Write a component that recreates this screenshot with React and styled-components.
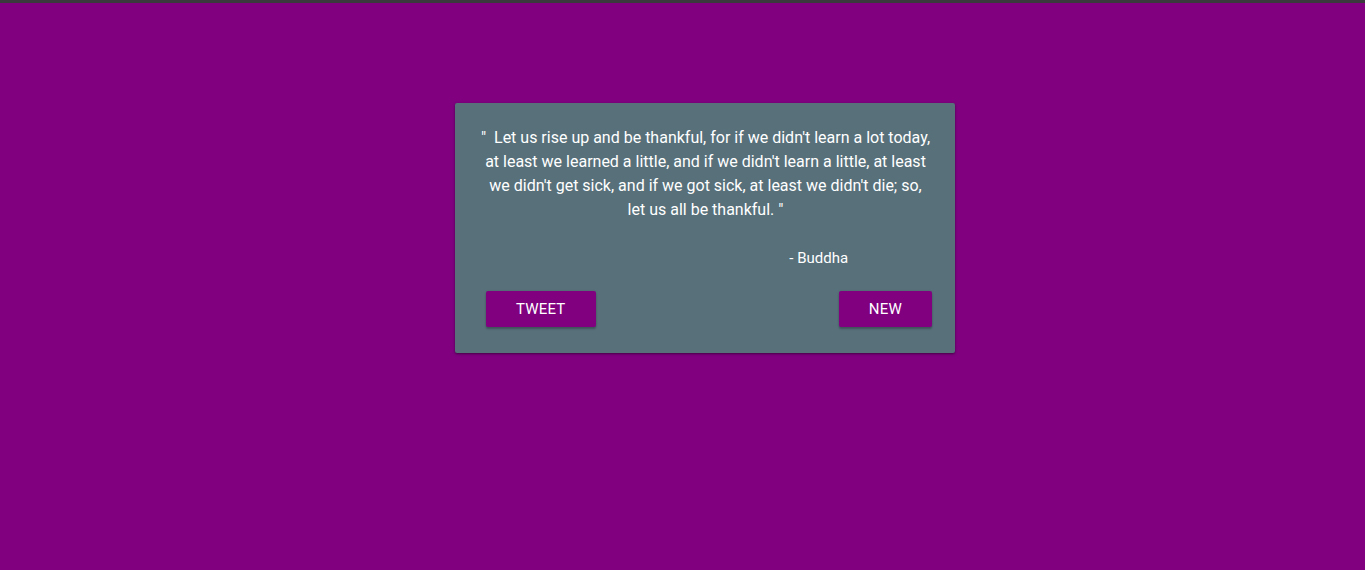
import React from 'react';
import styled, { createGlobalStyle } from 'styled-components';

const GlobalStyle = createGlobalStyle`
    html, body {
        margin: 0;
        padding: 0;
        background: #800080;
        font-family: Roboto, "Liberation Sans", sans-serif;
    }
`;

const TopBar = styled.div`
    height: 3px;
    background: #3a3a3c;
    box-shadow: 0 1px 1px rgba(0, 0, 0, 0.4);
`;

const Page = styled.div`
    min-height: 567px;
    background: #800080;
    display: flex;
    justify-content: center;
    align-items: flex-start;
    padding: 100px 0 0 45px;
    box-sizing: border-box;
`;

const Card = styled.div`
    width: 500px;
    box-sizing: border-box;
    background: #57707a;
    border-radius: 2px;
    box-shadow: 0 1px 3px rgba(0, 0, 0, 0.3), 0 1px 2px rgba(0, 0, 0, 0.2);
    padding: 23px 23px 26px 24px;
    color: #ffffff;
`;

const Quote = styled.p`
    margin: 0;
    font-size: 16px;
    line-height: 24px;
    text-align: center;
    white-space: pre-wrap;
`;

const Author = styled.p`
    margin: 24px 0 0 50%;
    font-size: 15px;
    line-height: 24px;
    text-align: center;
`;

const Actions = styled.div`
    display: flex;
    justify-content: space-between;
    align-items: center;
    margin-top: 21px;
    padding-left: 7px;
`;

const Button = styled.button`
    height: 36px;
    padding: 0 30px;
    border: none;
    border-radius: 2px;
    background: #800080;
    color: #ffffff;
    font-family: Roboto, "Liberation Sans", sans-serif;
    font-size: 15px;
    font-weight: 400;
    letter-spacing: 0.2px;
    text-transform: uppercase;
    box-shadow: 0 2px 2px rgba(0, 0, 0, 0.24), 0 0 2px rgba(0, 0, 0, 0.12);
    cursor: pointer;
`;

const quote = {
    text: "Let us rise up and be thankful, for if we didn't learn a lot today, at least we learned a little, and if we didn't learn a little, at least we didn't get sick, and if we got sick, at least we didn't die; so, let us all be thankful.",
    author: 'Buddha'
};

export default function App() {
    return (
        <>
            <GlobalStyle />
            <TopBar />
            <Page>
                <Card>
                    <Quote>{'"  ' + quote.text + ' "'}</Quote>
                    <Author>- {quote.author}</Author>
                    <Actions>
                        <Button>Tweet</Button>
                        <Button>New</Button>
                    </Actions>
                </Card>
            </Page>
        </>
    );
}
